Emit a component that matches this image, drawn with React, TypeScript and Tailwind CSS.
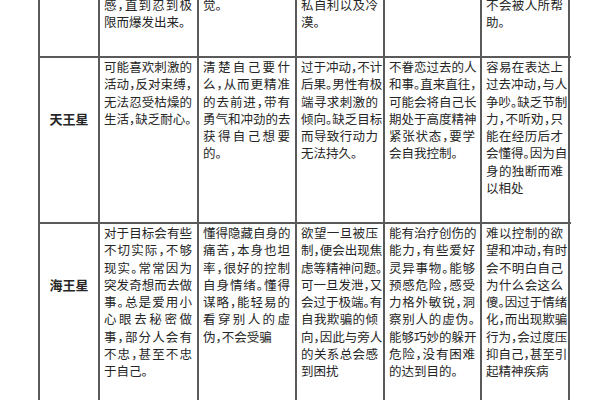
import React from "react";

type Row = { label: string; cells: string[][]; h: string };

const rows: Row[] = [
  {
    label: "",
    h: "h-[62px]",
    cells: [
      ["感，直到忍到极", "限而爆发出来。"],
      ["觉。"],
      ["私自利以及冷", "漠。"],
      [],
      ["不会被人所帮", "助。"],
    ],
  },
  {
    label: "天王星",
    h: "h-[166px]",
    cells: [
      ["可能喜欢刺激的", "活动，反对束缚，", "无法忍受枯燥的", "生活，缺乏耐心。"],
      ["清楚自己要什", "么，从而更精准", "的去前进，带有", "勇气和冲劲的去", "获得自己想要", "的。"],
      ["过于冲动，不计", "后果。男性有极", "端寻求刺激的", "倾向。缺乏目标", "而导致行动力", "无法持久。"],
      ["不眷恋过去的人", "和事。直来直往，", "可能会将自己长", "期处于高度精神", "紧张状态，要学", "会自我控制。"],
      ["容易在表达上", "过去冲动，与人", "争吵。缺乏节制", "力，不听劝，只", "能在经历后才", "会懂得。因为自", "身的独断而难", "以相处"],
    ],
  },
  {
    label: "海王星",
    h: "h-[200px]",
    cells: [
      ["对于目标会有些", "不切实际，不够", "现实。常常因为", "突发奇想而去做", "事。总是爱用小", "心眼去秘密做", "事，部分人会有", "不忠，甚至不忠", "于自己。"],
      ["懂得隐藏自身的", "痛苦，本身也坦", "率，很好的控制", "自身情绪。懂得", "谋略，能轻易的", "看穿别人的虚", "伪，不会受骗"],
      ["欲望一旦被压", "制，便会出现焦", "虑等精神问题。", "可一旦发泄，又", "会过于极端。有", "自我欺骗的倾", "向，因此与旁人", "的关系总会感", "到困扰"],
      ["能有治疗创伤的", "能力，有些爱好", "灵异事物。能够", "预感危险，感受", "力格外敏锐，洞", "察别人的虚伪。", "能够巧妙的躲开", "危险，没有困难", "的达到目的。"],
      ["难以控制的欲", "望和冲动，有时", "会不明白自己", "为什么会这么", "傻。因过于情绪", "化，而出现欺骗", "行为，会过度压", "抑自己，甚至引", "起精神疾病"],
    ],
  },
];

const colClasses = [
  "border-l-2",
  "border-l-2",
  "border-l-2",
  "border-l-2",
  "border-l-2 border-r-2",
];

function Lines({ lines }: { lines: string[] }) {
  return (
    <>
      {lines.map((l, i) =>
        i < lines.length - 1 ? (
          <div key={i} className="whitespace-nowrap text-justify [text-align-last:justify]">
            {l}
          </div>
        ) : (
          <div key={i} className="whitespace-nowrap">
            {l}
          </div>
        )
      )}
    </>
  );
}

export default function App() {
  return (
    <div className="w-[600px] h-[400px] overflow-hidden bg-white font-['Noto_Sans_CJK_SC','Noto_Sans',sans-serif] text-[#262626] [font-feature-settings:'halt']">
      <div className="ml-[38px] -mt-[4px] w-[533px]">
        {rows.map((r, ri) => (
          <div
            key={ri}
            className={`grid grid-cols-[60px_99px_98px_88px_97px_90px] border-b-2 border-[#5a5a5a] ${r.h}`}
          >
            <div className="border-l-2 border-[#5a5a5a] pt-[52px] text-center text-[13px] leading-[17.3px] font-bold">
              {r.label}
            </div>
            {r.cells.map((c, ci) => (
              <div
                key={ci}
                className={`${colClasses[ci]} border-[#5a5a5a] pl-[4px] pr-[5px] text-[12.5px] leading-[17.3px]`}
              >
                <Lines lines={c} />
              </div>
            ))}
          </div>
        ))}
      </div>
    </div>
  );
}
